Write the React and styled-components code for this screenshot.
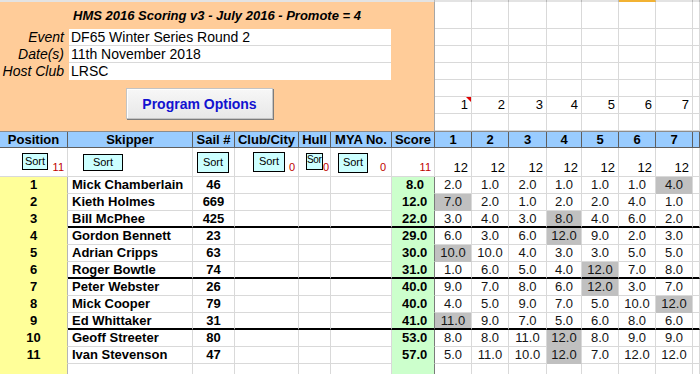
import React from 'react';
import styled, { createGlobalStyle, css } from 'styled-components';

const COLS = '68px 125px 42px 64px 32px 61px 43px 37px 37px 38px 35px 37px 37px 37px 1fr';
const RACE_COLS = '37px 37px 38px 35px 37px 37px 37px 1fr';
const GRID = '#d9d9d9';

const results = [
  { pos: 1, name: 'Mick Chamberlain', sail: 46, score: '8.0', races: ['2.0', '1.0', '2.0', '1.0', '1.0', '1.0', '4.0'], drop: 6 },
  { pos: 2, name: 'Kieth Holmes', sail: 669, score: '12.0', races: ['7.0', '2.0', '1.0', '2.0', '2.0', '4.0', '1.0'], drop: 0 },
  { pos: 3, name: 'Bill McPhee', sail: 425, score: '22.0', races: ['3.0', '4.0', '3.0', '8.0', '4.0', '6.0', '2.0'], drop: 3 },
  { pos: 4, name: 'Gordon Bennett', sail: 23, score: '29.0', races: ['6.0', '3.0', '6.0', '12.0', '9.0', '2.0', '3.0'], drop: 3 },
  { pos: 5, name: 'Adrian Cripps', sail: 63, score: '30.0', races: ['10.0', '10.0', '4.0', '3.0', '3.0', '5.0', '5.0'], drop: 0 },
  { pos: 6, name: 'Roger Bowtle', sail: 74, score: '31.0', races: ['1.0', '6.0', '5.0', '4.0', '12.0', '7.0', '8.0'], drop: 4 },
  { pos: 7, name: 'Peter Webster', sail: 26, score: '40.0', races: ['9.0', '7.0', '8.0', '6.0', '12.0', '3.0', '7.0'], drop: 4 },
  { pos: 8, name: 'Mick Cooper', sail: 79, score: '40.0', races: ['4.0', '5.0', '9.0', '7.0', '5.0', '10.0', '12.0'], drop: 6 },
  { pos: 9, name: 'Ed Whittaker', sail: 31, score: '41.0', races: ['11.0', '9.0', '7.0', '5.0', '6.0', '8.0', '6.0'], drop: 0 },
  { pos: 10, name: 'Geoff Streeter', sail: 80, score: '53.0', races: ['8.0', '8.0', '11.0', '12.0', '8.0', '9.0', '9.0'], drop: 3 },
  { pos: 11, name: 'Ivan Stevenson', sail: 47, score: '57.0', races: ['5.0', '11.0', '10.0', '12.0', '7.0', '12.0', '12.0'], drop: 3 },
];

const headers = ['Position', 'Skipper', 'Sail #', 'Club/City', 'Hull', 'MYA No.', 'Score', '1', '2', '3', '4', '5', '6', '7', ''];

// sort buttons: x offset in cell, y offset, width, height, red count
const sorts = [
  { x: 22, y: 5, w: 26, h: 17, count: '11' },
  { x: 15, y: 6, w: 40, h: 17 },
  { x: 4, y: 4, w: 32, h: 21 },
  { x: 18, y: 4, w: 32, h: 20, count: '0' },
  { x: 7, y: 5, w: 17, h: 17, count: '0', pr: 1, narrow: true },
  { x: 7, y: 5, w: 30, h: 20, count: '0', pr: 5 },
  { count: '11' },
];

const GlobalStyle = createGlobalStyle`
  *, *::before, *::after { box-sizing: border-box; }
  body {
    margin: 0;
    background: #fff;
    font-family: "Liberation Sans", Arial, sans-serif;
    color: #000;
  }
`;

const Sheet = styled.div`
  width: 700px;
  height: 374px;
  overflow: hidden;
`;

const TopStrip = styled.div`
  display: grid;
  grid-template-columns: 435px ${RACE_COLS};
  height: 2px;
  background: #e3e3e3;
`;

const StripCell = styled.div`
  border-right: 1px solid #b8b8b8;
  ${p => p.$active && css`border-bottom: 2px solid #f2b233;`}
`;

const TopArea = styled.div`
  display: flex;
  height: 129px;
`;

const InfoPanel = styled.div`
  width: 435px;
  flex: none;
  background: #ffcc99;
  border-right: 1px solid #a6a6a6;
  display: flex;
  flex-direction: column;
`;

const Title = styled.div`
  height: 27px;
  display: flex;
  align-items: center;
  justify-content: center;
  font-size: 13px;
  font-weight: 700;
  font-style: italic;
`;

const Fields = styled.div`
  display: grid;
  grid-template-columns: 69px 322px;
  grid-auto-rows: 17px;
`;

const FieldLabel = styled.div`
  text-align: right;
  padding-right: 5px;
  font-size: 14px;
  font-style: italic;
  line-height: 17px;
`;

const FieldValue = styled.div`
  background: #fff;
  padding-left: 2px;
  font-size: 14px;
  line-height: 16px;
  border-bottom: 1px solid ${p => (p.$last ? '#fff' : GRID)};
`;

const OptionsButton = styled.button`
  margin: 8px 0 0 126px;
  width: 147px;
  height: 31px;
  background: linear-gradient(#f7f7f7, #e8e8e8);
  border: 1px solid #c4c4c4;
  box-shadow: 1px 1px 0 #7c7c7c, inset 1px 1px 0 #fff;
  font-family: inherit;
  font-size: 14px;
  font-weight: 700;
  color: #1212d0;
  padding: 0;
`;

const RightGrid = styled.div`
  flex: 1;
  display: grid;
  grid-template-columns: ${RACE_COLS};
  grid-template-rows: 27px repeat(6, 17px);
`;

const RightCell = styled.div`
  position: relative;
  border-right: 1px solid ${GRID};
  border-bottom: 1px solid ${GRID};
  font-size: 13px;
  text-align: right;
  padding-right: 3px;
  line-height: 16px;
  ${p => p.$comment && css`
    &::after {
      content: '';
      position: absolute;
      top: 0;
      right: 0;
      border-style: solid;
      border-width: 0 5px 5px 0;
      border-color: transparent #e00000 transparent transparent;
    }
  `}
`;

const HeaderRow = styled.div`
  display: grid;
  grid-template-columns: ${COLS};
  border-top: 1px solid #8c8c8c;
`;

const HeadCell = styled.div`
  height: 16px;
  background: #99ccff;
  border-right: 1px solid #5f5f5f;
  border-bottom: 1px solid #5f5f5f;
  font-size: 13px;
  font-weight: 700;
  text-align: center;
  line-height: 15px;
  white-space: nowrap;
  overflow: hidden;
`;

const SortRow = styled.div`
  display: grid;
  grid-template-columns: ${COLS};
  height: 29px;
`;

const SortCell = styled.div`
  display: flex;
  align-items: flex-start;
  border-right: 1px solid ${GRID};
  border-bottom: 1px solid ${GRID};
  overflow: hidden;
`;

const SortButton = styled.div`
  flex: none;
  margin: ${p => p.$y}px 0 0 ${p => p.$x}px;
  width: ${p => p.$w}px;
  height: ${p => p.$h}px;
  background: #ccffff;
  border: 1px solid #000;
  font-size: 11px;
  line-height: ${p => p.$h - 3}px;
  text-align: center;
  white-space: nowrap;
  overflow: hidden;
  ${p => p.$narrow && css`
    font-size: 10px;
    letter-spacing: -0.4px;
    text-align: left;
    line-height: 12px;
  `}
`;

const Count = styled.span`
  margin-left: auto;
  align-self: flex-end;
  padding-right: ${p => p.$pr ?? 3}px;
  font-size: 11px;
  line-height: 13px;
  margin-bottom: 2px;
  color: ${p => (p.$dark ? '#000' : '#c00000')};
  ${p => p.$dark && css`font-size: 13px; line-height: 14px; margin-bottom: 1px;`}
`;

const DataRow = styled.div`
  display: grid;
  grid-template-columns: ${COLS};
`;

const Cell = styled.div`
  height: 17px;
  background: ${p => p.$bg || '#fff'};
  border-right: 1px solid ${p => p.$edge || GRID};
  border-bottom: ${p => (p.$thick ? '2px solid #000' : `1px solid ${p.$bg ? p.$bg : GRID}`)};
  font-size: 13px;
  font-weight: ${p => (p.$bold ? 700 : 400)};
  text-align: ${p => p.$align || 'center'};
  padding: 0 ${p => p.$pad ?? 0}px;
  line-height: 16px;
  white-space: nowrap;
  overflow: hidden;
  color: ${p => (p.$bold ? '#000' : '#151515')};
`;

const YELLOW = '#ffff99';
const GREEN = '#ccffcc';
const GREY = '#c0c0c0';

const ResultRow = ({ r, thick }) => (
  <DataRow>
    <Cell $bg={YELLOW} $bold $edge="#b5b5b5">{r.pos}</Cell>
    <Cell $thick={thick} $bold $align="left" $pad={4}>{r.name}</Cell>
    <Cell $thick={thick} $bold>{r.sail}</Cell>
    <Cell $thick={thick} />
    <Cell $thick={thick} />
    <Cell $thick={thick} />
    <Cell $thick={thick} $bg={GREEN} $bold $align="right" $pad={10} $edge="#7a7a7a">{r.score}</Cell>
    {r.races.map((v, i) => (
      <Cell key={i} $thick={thick} $bg={i === r.drop ? GREY : undefined}>{v}</Cell>
    ))}
    <Cell $thick={thick} />
  </DataRow>
);

export default function App() {
  return (
    <>
      <GlobalStyle />
      <Sheet>
        <TopStrip>
          {Array.from({ length: 9 }).map((_, i) => (
            <StripCell key={i} $active={i === 6} />
          ))}
        </TopStrip>

        <TopArea>
          <InfoPanel>
            <Title>HMS 2016 Scoring v3 - July 2016 - Promote = 4</Title>
            <Fields>
              <FieldLabel>Event</FieldLabel>
              <FieldValue>DF65 Winter Series Round 2</FieldValue>
              <FieldLabel>Date(s)</FieldLabel>
              <FieldValue>11th November 2018</FieldValue>
              <FieldLabel>Host Club</FieldLabel>
              <FieldValue $last>LRSC</FieldValue>
            </Fields>
            <OptionsButton>Program Options</OptionsButton>
          </InfoPanel>
          <RightGrid>
            {Array.from({ length: 7 }).map((_, row) =>
              Array.from({ length: 8 }).map((__, col) => (
                <RightCell key={`${row}-${col}`} $comment={row === 5 && col === 0}>
                  {row === 5 && col < 7 ? col + 1 : ''}
                </RightCell>
              ))
            )}
          </RightGrid>
        </TopArea>

        <HeaderRow>
          {headers.map((h, i) => (
            <HeadCell key={i}>{h}</HeadCell>
          ))}
        </HeaderRow>

        <SortRow>
          {sorts.map((s, i) => (
            <SortCell key={i}>
              {s.w && (
                <SortButton $x={s.x} $y={s.y} $w={s.w} $h={s.h} $narrow={s.narrow}>
                  {s.narrow ? 'Sor' : 'Sort'}
                </SortButton>
              )}
              {s.count && <Count $pr={s.pr}>{s.count}</Count>}
            </SortCell>
          ))}
          {Array.from({ length: 7 }).map((_, i) => (
            <SortCell key={`r${i}`}>
              <Count $dark>12</Count>
            </SortCell>
          ))}
          <SortCell />
        </SortRow>

        {results.map(r => (
          <ResultRow key={r.pos} r={r} thick={r.pos % 3 === 0 && r.pos < 10} />
        ))}
        <ResultRow r={{ pos: '', name: '', sail: '', score: '', races: ['', '', '', '', '', '', ''], drop: -1 }} />
      </Sheet>
    </>
  );
}
